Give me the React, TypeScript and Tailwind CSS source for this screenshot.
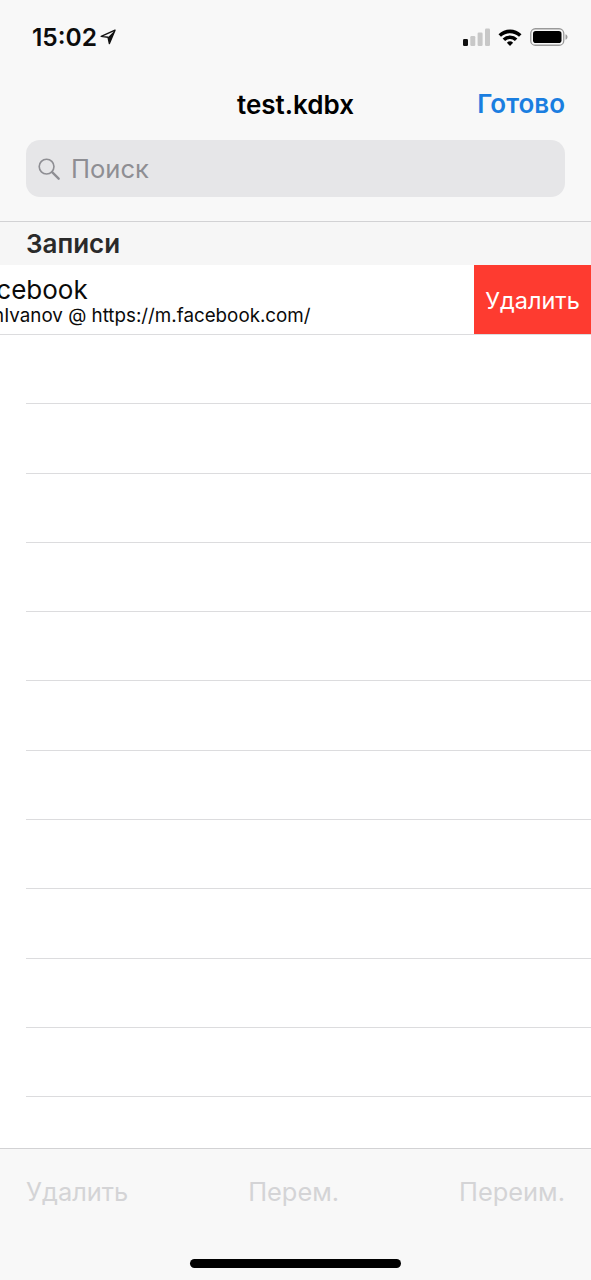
import React from "react";

const font = { fontFamily: "Inter, 'Liberation Sans', sans-serif" };

function Signal() {
  return (
    <svg width="27" height="18" viewBox="0 0 27 18">
      <rect x="0" y="11" width="5" height="7" rx="1.2" fill="#111" />
      <rect x="7.3" y="8" width="5" height="10" rx="1.2" fill="#c8c8c8" />
      <rect x="14.6" y="4.5" width="5" height="13.5" rx="1.2" fill="#c8c8c8" />
      <rect x="22" y="0.5" width="5" height="17.5" rx="1.2" fill="#c8c8c8" />
    </svg>
  );
}

function Wifi() {
  return (
    <svg width="24" height="18" viewBox="0 0 24 18">
      <path d="M0.5 6.2 A16.5 16.5 0 0 1 23.5 6.2 L21 8.8 A13 13 0 0 0 3 8.8 Z" fill="#000" />
      <path d="M4.6 10.4 A10.6 10.6 0 0 1 19.4 10.4 L16.9 13 A7 7 0 0 0 7.1 13 Z" fill="#000" />
      <path d="M8.9 14.7 A4.6 4.6 0 0 1 15.1 14.7 L12 18 Z" fill="#000" />
    </svg>
  );
}

function Battery() {
  return (
    <svg width="38" height="18" viewBox="0 0 38 18">
      <rect x="0.75" y="0.75" width="33" height="16.5" rx="4.6" fill="none" stroke="#9a9a9a" strokeWidth="1.3" />
      <rect x="3" y="3" width="28.5" height="12" rx="2.8" fill="#000" />
      <path d="M35.5 6.2 C37 6.8 37.5 7.8 37.5 9 C37.5 10.2 37 11.2 35.5 11.8 Z" fill="#9a9a9a" />
    </svg>
  );
}

function Arrow() {
  return (
    <svg width="16" height="16" viewBox="0 0 16 16" fill="none">
      <path d="M15 1.2 L1.2 7.4 L8 8.2 L9.4 14.6 Z" stroke="#111" strokeWidth="1.4" strokeLinejoin="round" />
      <path d="M15 1.2 L8 8.2 L9.4 14.6 Z" fill="#111" />
    </svg>
  );
}

function SearchGlyph() {
  return (
    <svg width="23" height="23" viewBox="0 0 24 24" fill="none">
      <circle cx="10" cy="10" r="7.7" stroke="#8e8e93" strokeWidth="1.7" />
      <path d="M15.8 15.8 L22.6 22.6" stroke="#8e8e93" strokeWidth="2.4" strokeLinecap="round" />
    </svg>
  );
}

const emptyRows = Array.from({ length: 11 }, (_, i) => i);

export default function App() {
  return (
    <div style={font} className="w-[591px] h-[1280px] flex flex-col overflow-hidden bg-white">
      <header className="h-[222px] shrink-0 flex flex-col bg-[#f8f8f8] border-b border-[#d2d2d4]">
        <div className="h-[74px] flex items-center justify-between pl-8 pr-[23px]">
          <div className="flex items-center gap-[3px]">
            <span className="text-[24.5px] font-semibold leading-none text-[#0c0c0c]">15:02</span>
            <Arrow />
          </div>
          <div className="flex items-center gap-[8px]">
            <Signal />
            <Wifi />
            <Battery />
          </div>
        </div>
        <div className="h-[62px] flex items-center justify-between relative pl-[26px] pr-[26px]">
          <span className="w-full text-center text-[26px] font-semibold leading-none text-black">test.kdbx</span>
          <span className="absolute right-[26px] top-[17px] text-[26px] font-semibold leading-none text-[#1a7ee0]">Готово</span>
        </div>
        <div className="px-[26px] pt-[4px]">
          <div className="h-[57px] rounded-[14px] bg-[#e6e6e8] flex items-center gap-[11px] pl-[11px]">
            <SearchGlyph />
            <span className="text-[25.6px] leading-none text-[#8e8e93]">Поиск</span>
          </div>
        </div>
      </header>

      <div className="h-[43px] shrink-0 bg-[#f6f6f6] flex items-center pl-[26px]">
        <span className="text-[26px] font-semibold leading-none text-[#2a2a2a]">Записи</span>
      </div>

      <main className="flex-1 flex flex-col min-h-0">
        <div className="h-[70px] shrink-0 flex border-b border-[#dcdcde] overflow-hidden">
          <div className="flex-1 flex flex-col overflow-hidden pt-[10px]">
            <span className="block -ml-[33px] text-[26px] leading-[30px] text-[#0a0a0a] whitespace-nowrap">Facebook</span>
            <span className="block -ml-[40px] text-[18.8px] leading-[22px] text-[#0a0a0a] whitespace-nowrap">JohnIvanov @ https://m.facebook.com/</span>
          </div>
          <div className="w-[117px] shrink-0 bg-[#fe3b30] flex items-center justify-center pt-[2px]">
            <span className="text-[23.5px] leading-none text-[#fff]">Удалить</span>
          </div>
        </div>
        {emptyRows.map((i) => (
          <div key={i} className="h-[69.3px] shrink-0 pl-[26px] flex items-end">
            <div className="w-full h-px bg-[#dcdcde]" />
          </div>
        ))}
        <div className="flex-1" />
      </main>

      <footer className="h-[132px] shrink-0 bg-[#f8f8f8] border-t border-[#d2d2d4] flex flex-col">
        <div className="flex justify-between items-center px-[26px] pt-[28px]">
          <span className="text-[25.4px] leading-[30px] text-[#d4d4d6]">Удалить</span>
          <span className="text-[25.4px] leading-[30px] text-[#d4d4d6]">Перем.</span>
          <span className="text-[25.4px] leading-[30px] text-[#d4d4d6]">Переим.</span>
        </div>
        <div className="flex-1 flex items-end justify-center pb-[12px]">
          <div className="w-[211px] h-[9px] rounded-full bg-black" />
        </div>
      </footer>
    </div>
  );
}
